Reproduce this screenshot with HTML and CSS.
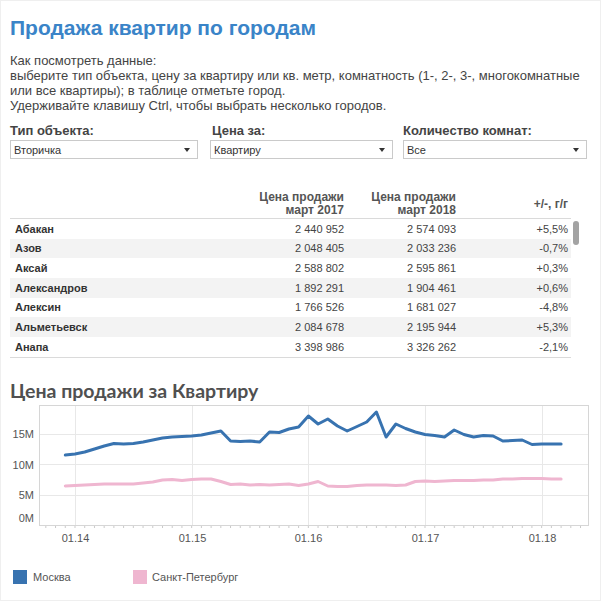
FILE: index.html
```html
<!DOCTYPE html>
<html lang="ru">
<head>
<meta charset="utf-8">
<title>Продажа квартир по городам</title>
<link rel="stylesheet" href="styles.css">
</head>
<body>
<div class="page">
  <h1 class="title">Продажа квартир по городам</h1>
  <p class="intro">Как посмотреть данные:<br>выберите тип объекта, цену за квартиру или кв. метр, комнатность (1-, 2-, 3-, многокомнатные или все квартиры); в таблице отметьте город.<br>Удерживайте клавишу Ctrl, чтобы выбрать несколько городов.</p>

  <div class="filters">
    <div class="filter f-type">
      <div class="filter-label">Тип объекта:</div>
      <div class="select"><span>Вторичка</span><span class="arrow"></span></div>
    </div>
    <div class="filter f-price">
      <div class="filter-label">Цена за:</div>
      <div class="select"><span>Квартиру</span><span class="arrow"></span></div>
    </div>
    <div class="filter f-rooms">
      <div class="filter-label">Количество комнат:</div>
      <div class="select"><span>Все</span><span class="arrow"></span></div>
    </div>
  </div>

  <div class="table-area">
    <table class="data">
      <colgroup><col class="c-city"><col class="c-num"><col class="c-num"><col class="c-num"></colgroup>
      <thead>
        <tr><th></th><th>Цена продажи<br>март 2017</th><th>Цена продажи<br>март 2018</th><th class="mid">+/-, г/г</th></tr>
      </thead>
      <tbody>
        <tr><td class="city">Абакан</td><td>2 440 952</td><td>2 574 093</td><td>+5,5%</td></tr>
        <tr><td class="city">Азов</td><td>2 048 405</td><td>2 033 236</td><td>-0,7%</td></tr>
        <tr><td class="city">Аксай</td><td>2 588 802</td><td>2 595 861</td><td>+0,3%</td></tr>
        <tr><td class="city">Александров</td><td>1 892 291</td><td>1 904 461</td><td>+0,6%</td></tr>
        <tr><td class="city">Алексин</td><td>1 766 526</td><td>1 681 027</td><td>-4,8%</td></tr>
        <tr><td class="city">Альметьевск</td><td>2 084 678</td><td>2 195 944</td><td>+5,3%</td></tr>
        <tr><td class="city">Анапа</td><td>3 398 986</td><td>3 326 262</td><td>-2,1%</td></tr>
      </tbody>
    </table>
    <div class="scroll"><div class="thumb"></div></div>
  </div>

  <h2 class="chart-title">Цена продажи за Квартиру</h2>
  <svg class="chart" width="582" height="145" viewBox="10 405 582 145">
    <defs>
      <pattern id="ticks" patternUnits="userSpaceOnUse" x="74.5" y="527" width="9.722" height="4">
        <rect x="0" y="0" width="1" height="3" fill="#c9c9c9"/>
      </pattern>
    </defs>
    <g stroke="#e8e8e8" stroke-width="1">
      <line x1="75.5" y1="408" x2="75.5" y2="527"/>
      <line x1="192.5" y1="408" x2="192.5" y2="527"/>
      <line x1="308.5" y1="408" x2="308.5" y2="527"/>
      <line x1="425.5" y1="408" x2="425.5" y2="527"/>
      <line x1="542.5" y1="408" x2="542.5" y2="527"/>
      <line x1="40" y1="436.5" x2="588" y2="436.5"/>
      <line x1="40" y1="466.5" x2="588" y2="466.5"/>
      <line x1="40" y1="497.5" x2="588" y2="497.5"/>
    </g>
    <rect x="39.5" y="407.5" width="549" height="120" fill="none" stroke="#d6d6d6"/>
    <rect x="40" y="528" width="548" height="3" fill="url(#ticks)"/>
    <g class="ylab" text-anchor="end">
      <text x="34" y="440">15M</text>
      <text x="34" y="470.5">10M</text>
      <text x="34" y="501">5M</text>
      <text x="34" y="524">0M</text>
    </g>
    <g class="xlab" text-anchor="middle">
      <text x="75.5" y="544">01.14</text>
      <text x="192.5" y="544">01.15</text>
      <text x="308.5" y="544">01.16</text>
      <text x="425.5" y="544">01.17</text>
      <text x="542.5" y="544">01.18</text>
    </g>
    <polyline class="line-spb" points="65.3,488 75,487.5 84.7,487 94.5,486.5 104.2,486 113.9,486 123.6,486 133.4,486 143.1,485 152.8,484 162.5,482 172.2,481.5 182,482.5 191.7,481.5 201.4,481 211.1,481 220.9,483.5 230.6,486.5 240.3,486 250,487 259.7,486.5 269.5,487 279.2,486.5 288.9,486 298.6,487.5 308.4,486 318.1,483.5 327.8,488 337.5,488.5 347.2,488.5 357,487.5 366.7,487 376.4,487 386.1,487 395.9,487.5 405.6,487 415.3,483.5 425,483 434.7,483.5 444.5,483 454.2,482.5 463.9,482.5 473.6,482.5 483.4,482 493.1,482 502.8,481 512.5,481 522.2,480.5 532,480.5 541.7,480.5 551.4,481 561.1,481"/>
    <polyline class="line-msk" points="65.3,457 75,456 84.7,454 94.5,451 104.2,448 113.9,445.5 123.6,446 133.4,445.5 143.1,444 152.8,442 162.5,440 172.2,439 182,438.5 191.7,438 201.4,437 211.1,435 220.9,433 230.6,443 240.3,443.5 250,443 259.7,444 269.5,434 279.2,434.5 288.9,431 298.6,429 308.4,418 318.1,426 327.8,421 337.5,428 347.2,433 357,428.5 366.7,424 376.4,414 386.1,439 395.9,426 405.6,430.5 415.3,434 425,436.5 434.7,437.5 444.5,439 454.2,432 463.9,436.5 473.6,439 483.4,437.5 493.1,438 502.8,443 512.5,442.5 522.2,442 532,446.5 541.7,446 551.4,446 561.1,446"/>
  </svg>

  <div class="legend">
    <div class="legend-item"><span class="swatch swatch-msk"></span>Москва</div>
    <div class="legend-item"><span class="swatch swatch-spb"></span>Санкт-Петербург</div>
  </div>
</div>
</body>
</html>
```

FILE: styles.css
```css
html, body {
  margin: 0;
  padding: 0;
  background: #fff;
}

body {
  font-family: "Liberation Sans", Arial, sans-serif;
  color: #333;
}

.page {
  width: 601px;
  height: 601px;
  box-sizing: border-box;
  border: 1px solid #efefef;
  padding: 0 0 0 9px;
  overflow: hidden;
}

.title {
  margin: 15px 0 0;
  font-size: 21px;
  line-height: 24px;
  font-weight: bold;
  color: #3a84c8;
}

.intro {
  margin: 13px 0 0;
  font-size: 13px;
  line-height: 15px;
  color: #444;
}

.filters {
  display: flex;
  margin-top: 10px;
}

.f-type { width: 188px; margin-right: 12px; }
.f-price { width: 183px; margin-right: 10px; }
.f-rooms { width: 184px; }

.filter-label {
  font-size: 13px;
  line-height: 15px;
  font-weight: bold;
  color: #444;
  margin-bottom: 2px;
}

.f-price .filter-label { padding-left: 2px; }

.select {
  height: 19px;
  box-sizing: border-box;
  border: 1px solid #cacaca;
  display: flex;
  align-items: center;
  justify-content: space-between;
  padding: 0 7px 0 3px;
  font-size: 11px;
  color: #333;
  background: #fff;
}

.arrow {
  width: 0;
  height: 0;
  border-left: 3px solid transparent;
  border-right: 3px solid transparent;
  border-top: 4px solid #333;
}

.table-area {
  display: flex;
  margin-top: 32px;
}

.data {
  width: 561px;
  border-collapse: collapse;
  table-layout: fixed;
}

.c-city { width: 225px; }
.c-num { width: 112px; }

.data th {
  font-size: 12px;
  line-height: 13px;
  font-weight: bold;
  color: #555;
  text-align: right;
  vertical-align: bottom;
  padding: 0 3px 1px 5px;
  border-bottom: 1px solid #dadada;
}

.data th.mid {
  vertical-align: middle;
}

.data td {
  height: 19.67px;
  padding: 0 3px 0 5px;
  font-size: 11px;
  line-height: 14px;
  color: #444;
  text-align: right;
  white-space: nowrap;
}

.data td.city {
  text-align: left;
  font-weight: bold;
  color: #333;
}

.data tbody tr:nth-child(even) td {
  background: #f3f3f3;
}

.data tbody tr:last-child td {
  border-bottom: 1px solid #dadada;
}

.scroll {
  padding: 30px 0 0 2px;
}

.thumb {
  width: 6px;
  height: 24px;
  border-radius: 3px;
  background: #a3a3a3;
}

.chart-title {
  margin: 21px 0 0;
  font-family: Lato, "Open Sans", "Liberation Sans", sans-serif;
  font-size: 19.5px;
  line-height: 24px;
  font-weight: 700;
  color: #505050;
}

.chart {
  display: block;
}

.ylab text, .xlab text {
  font-family: "Liberation Sans", Arial, sans-serif;
  font-size: 11px;
  fill: #555;
}

.line-msk {
  fill: none;
  stroke: #3873b0;
  stroke-width: 3;
  stroke-linejoin: round;
  stroke-linecap: round;
}

.line-spb {
  fill: none;
  stroke: #efb6d0;
  stroke-width: 3;
  stroke-linejoin: round;
  stroke-linecap: round;
}

.legend {
  display: flex;
  margin-top: 22px;
  padding-left: 3px;
  font-size: 11px;
  color: #555;
}

.legend-item {
  display: flex;
  align-items: center;
  height: 14px;
}

.legend-item:first-child {
  width: 120px;
}

.swatch {
  width: 14px;
  height: 14px;
  margin-right: 6px;
}

.swatch-msk { background: #3873b0; }
.swatch-spb { background: #efb6d0; margin-right: 5px; }
```
